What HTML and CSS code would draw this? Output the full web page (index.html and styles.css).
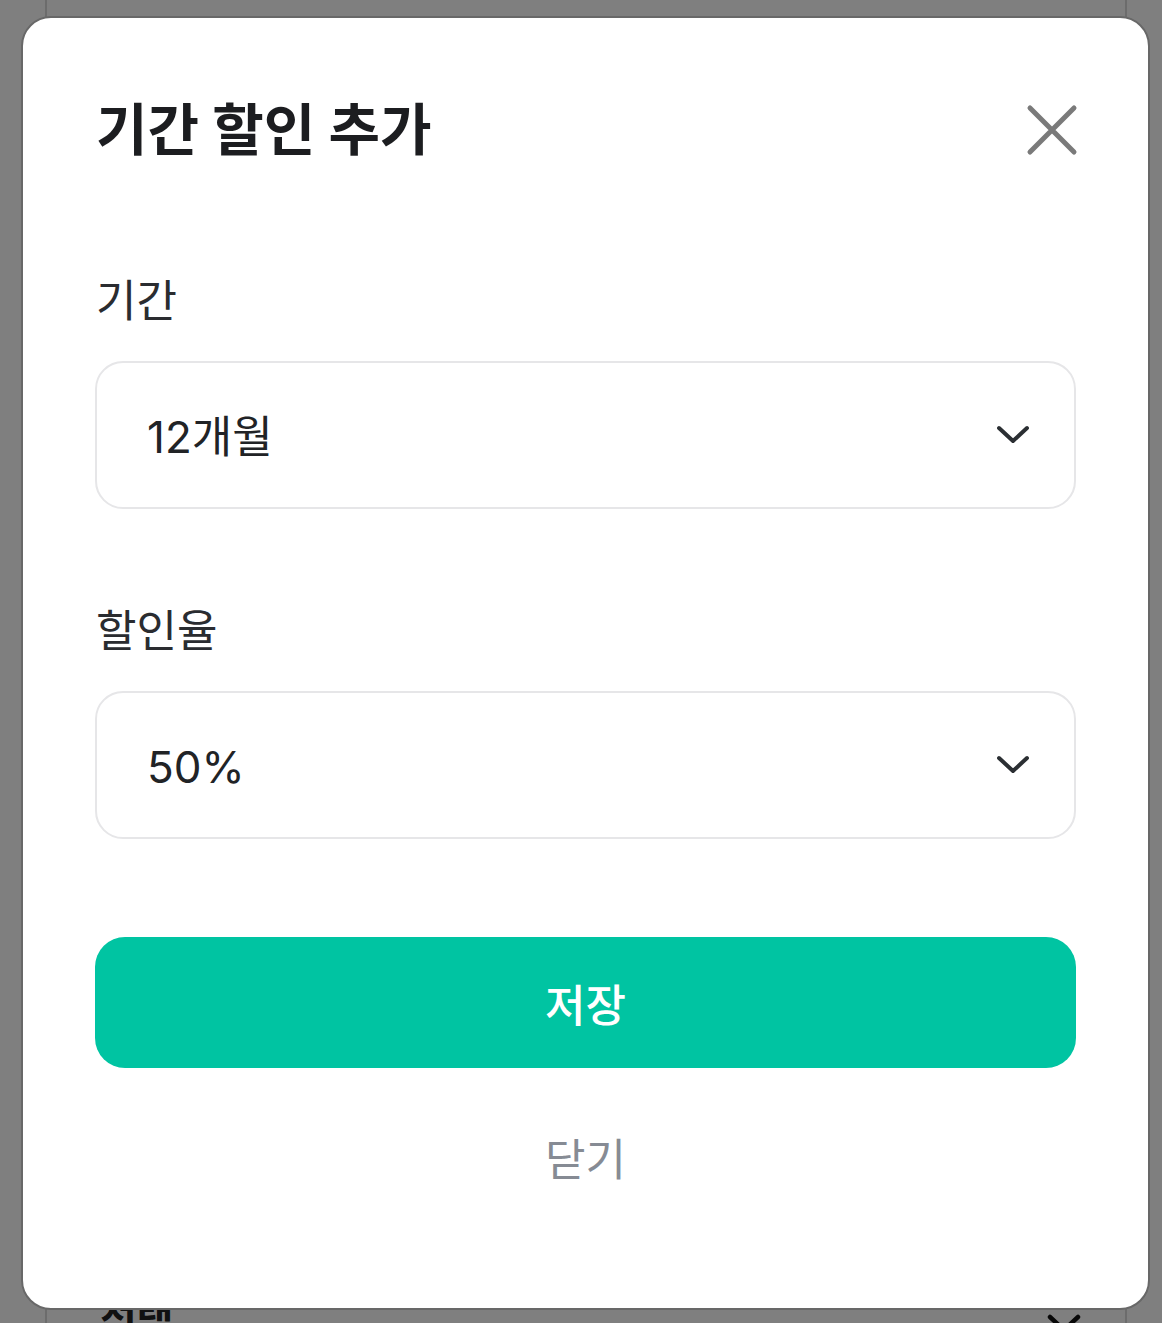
FILE: index.html
```html
<!DOCTYPE html>
<html lang="ko">
<head>
<meta charset="utf-8">
<title>기간 할인 추가</title>
<link rel="stylesheet" href="styles.css">
</head>
<body>
<div class="page">
  <div class="back-card">
    <div class="back-row">
      <span class="back-label">선택</span>
      <svg class="back-chev" width="34" height="20" viewBox="0 0 34 20"><path d="M3 3 L17 16 L31 3" fill="none" stroke="#111" stroke-width="4.5" stroke-linecap="round" stroke-linejoin="round"/></svg>
    </div>
  </div>
</div>
<div class="overlay"></div>
<div class="modal">
  <div class="modal-head">
    <h1 class="title">기간 할인 추가</h1>
    <svg class="close" width="52" height="52" viewBox="0 0 52 52"><path d="M4 4 L48 48 M48 4 L4 48" fill="none" stroke="#7a7a7a" stroke-width="5" stroke-linecap="round"/></svg>
  </div>
  <div class="field">
    <div class="label">기간</div>
    <div class="select">
      <span class="value">12개월</span>
      <svg class="chev" width="36" height="22" viewBox="0 0 36 22"><path d="M4 4 L18 17 L32 4" fill="none" stroke="#2b2f33" stroke-width="4" stroke-linecap="round" stroke-linejoin="round"/></svg>
    </div>
  </div>
  <div class="field field-2">
    <div class="label">할인율</div>
    <div class="select">
      <span class="value">50%</span>
      <svg class="chev" width="36" height="22" viewBox="0 0 36 22"><path d="M4 4 L18 17 L32 4" fill="none" stroke="#2b2f33" stroke-width="4" stroke-linecap="round" stroke-linejoin="round"/></svg>
    </div>
  </div>
  <button class="save">저장</button>
  <button class="dismiss">닫기</button>
</div>
</body>
</html>
```

FILE: styles.css
```css
* { box-sizing: border-box; }
html, body { margin: 0; padding: 0; }
body {
  width: 1162px;
  height: 1323px;
  overflow: hidden;
  background: #ffffff;
  font-family: "Inter", "Noto Sans CJK KR", sans-serif;
}
.page {
  padding: 0 35px 0 45px;
  height: 1323px;
}
.back-card {
  height: 1323px;
  border-left: 2px solid #d8d8d8;
  border-right: 2px solid #d8d8d8;
  padding-top: 1288px;
}
.back-row {
  display: flex;
  align-items: center;
  justify-content: space-between;
  padding: 0 44px 0 53px;
}
.back-label {
  font-size: 40px;
  font-weight: 700;
  line-height: 60px;
  color: #222;
}
.back-chev { margin-top: 12px; }
.overlay {
  position: fixed;
  inset: 0;
  background: rgba(0, 0, 0, 0.5);
}
.modal {
  position: fixed;
  left: 21px;
  top: 16px;
  width: 1129px;
  height: 1294px;
  background: #fff;
  border: 2px solid #686868;
  border-radius: 30px;
  padding: 80px 72px 0 72px;
  display: flex;
  flex-direction: column;
}
.modal-head {
  display: flex;
  align-items: center;
  justify-content: space-between;
  height: 64px;
}
.title {
  margin: 0 0 0 1px;
  font-size: 56px;
  font-weight: 700;
  line-height: 64px;
  color: #1c1d20;
}
.close { margin-right: -2px; }
.field { margin-top: 113px; }
.field-2 { margin-top: 96px; }
.label {
  font-size: 44px;
  line-height: 52px;
  color: #2a2c30;
  margin-left: 1px;
}
.select {
  margin-top: 34px;
  height: 148px;
  border: 2px solid #e6e6e8;
  border-radius: 28px;
  display: flex;
  align-items: center;
  justify-content: space-between;
  padding: 0 43px 0 50px;
}
.value {
  font-size: 44px;
  line-height: 52px;
  color: #212326;
  margin-top: 4px;
}
.save {
  margin-top: 98px;
  height: 131px;
  border: none;
  border-radius: 30px;
  background: #00c4a2;
  color: #fff;
  font-family: inherit;
  font-size: 44px;
  font-weight: 500;
  padding: 0;
}
.dismiss {
  margin-top: 66px;
  align-self: center;
  border: none;
  background: none;
  color: #868b94;
  font-family: inherit;
  font-size: 44px;
  line-height: 52px;
  padding: 0;
}
```
